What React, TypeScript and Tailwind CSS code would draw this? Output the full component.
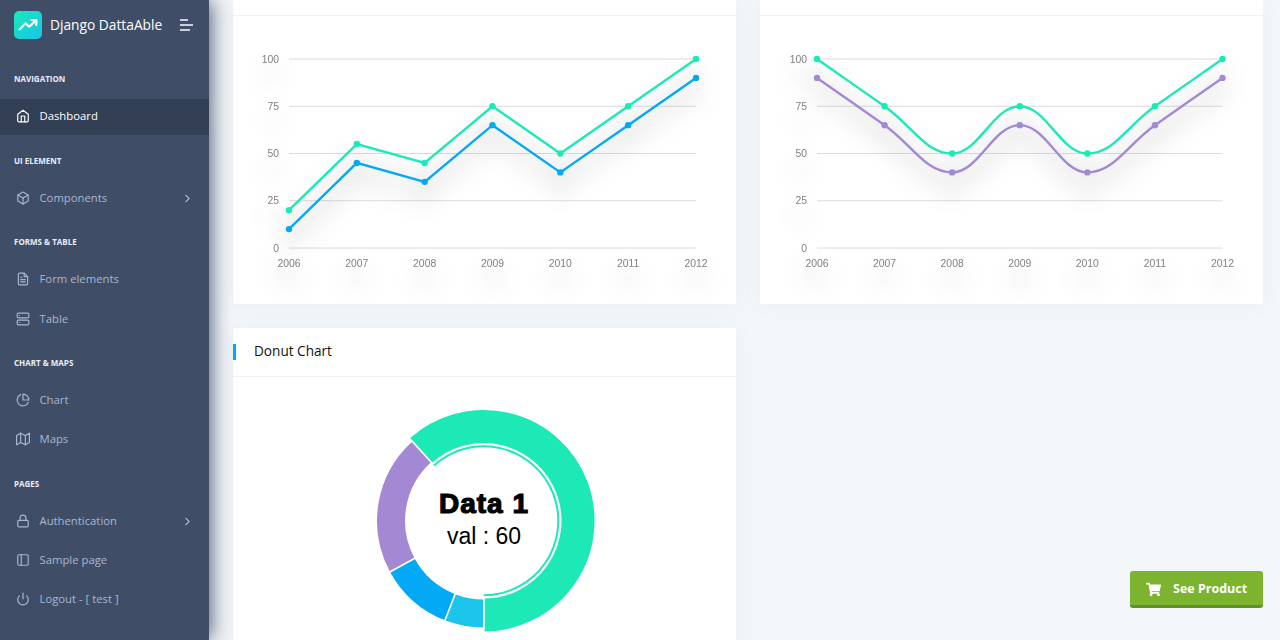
import type { ReactNode } from "react"
import { FiBox, FiChevronRight, FiFileText, FiHome, FiLock, FiMap, FiPieChart, FiPower, FiServer, FiSidebar } from "react-icons/fi"
import { FaShoppingCart } from "react-icons/fa"

const years = [2006, 2007, 2008, 2009, 2010, 2011, 2012]
const ticks = [100, 75, 50, 25, 0]

const yOf = (v: number) => 248 - v * 1.89

function straightPath(xs: number[], vals: number[]) {
  return vals.map((v, i) => `${i === 0 ? "M" : "L"}${xs[i]} ${yOf(v)}`).join(" ")
}

// same look as a smoothed line: flat at the peaks, straight-ish between
function smoothPath(xs: number[], vals: number[]) {
  const ys = vals.map(yOf)
  const slope = (i: number) => {
    if (i === 0) return (ys[1] - ys[0]) / (xs[1] - xs[0])
    if (i === ys.length - 1) return (ys[i] - ys[i - 1]) / (xs[i] - xs[i - 1])
    if ((ys[i] - ys[i - 1]) * (ys[i + 1] - ys[i]) <= 0) return 0
    return (ys[i + 1] - ys[i - 1]) / (xs[i + 1] - xs[i - 1])
  }
  let d = `M${xs[0]} ${ys[0]}`
  for (let i = 1; i < ys.length; i++) {
    const dx = (xs[i] - xs[i - 1]) * 0.4
    d += ` C${xs[i - 1] + dx} ${ys[i - 1] + slope(i - 1) * dx} ${xs[i] - dx} ${ys[i] - slope(i) * dx} ${xs[i]} ${ys[i]}`
  }
  return d
}

type Series = { color: string; values: number[] }

function LineChart({ left, x0, x1, smooth, series }: { left: number; x0: number; x1: number; smooth?: boolean; series: Series[] }) {
  const xs = years.map((_, i) => x0 + ((x1 - x0) * i) / 6)
  return (
    <svg viewBox={`${left} 16 503 288`} className="block h-[288px] w-[503px]">
      {ticks.map((t) => (
        <line key={t} x1={x0} x2={x1} y1={yOf(t)} y2={yOf(t)} stroke="#dcdcdc" strokeWidth="1" />
      ))}
      <g className="drop-shadow-[0_16px_11px_rgba(0,0,0,0.3)]" fill="#808080" fontSize="10.4" fontFamily="'Liberation Sans', sans-serif">
        {ticks.map((t) => (
          <text key={t} x={x0 - 10} y={yOf(t) + 3.5} textAnchor="end">
            {t}
          </text>
        ))}
        {years.map((y, i) => (
          <text key={y} x={xs[i]} y={267} textAnchor="middle">
            {y}
          </text>
        ))}
        {series.map((s) => (
          <g key={s.color}>
            <path d={smooth ? smoothPath(xs, s.values) : straightPath(xs, s.values)} fill="none" stroke={s.color} strokeWidth="2.4" />
            {s.values.map((v, i) => (
              <circle key={i} cx={xs[i]} cy={yOf(v)} r="3.2" fill={s.color} />
            ))}
          </g>
        ))}
      </g>
    </svg>
  )
}

function arc(r0: number, r1: number, a0: number, a1: number) {
  const pt = (r: number, a: number) => {
    const t = (a * Math.PI) / 180
    return `${(r * Math.sin(t)).toFixed(2)} ${(-r * Math.cos(t)).toFixed(2)}`
  }
  const large = a1 - a0 > 180 ? 1 : 0
  return `M${pt(r1, a0)} A${r1} ${r1} 0 ${large} 1 ${pt(r1, a1)} L${pt(r0, a1)} A${r0} ${r0} 0 ${large} 0 ${pt(r0, a0)} Z`
}

function Donut() {
  return (
    <svg viewBox="233 377 503 263" className="block h-[263px] w-[503px]">
      <g transform="translate(483.8 520.8)" stroke="#fff" strokeWidth="1.5">
        <path d={arc(77, 111.5, -42, 180)} fill="#1de9b6" />
        <path d={arc(73.5, 75.5, -42, 180)} fill="#1de9b6" strokeWidth="0" />
        <path d={arc(78, 107.5, -118.6, -42)} fill="#a389d4" />
        <path d={arc(78, 107.5, -158.7, -118.6)} fill="#04a9f5" />
        <path d={arc(78, 107.5, -180, -158.7)} fill="#1dc4e9" />
      </g>
      <text x="484" y="513" textAnchor="middle" fontSize="28" fontWeight="700" fontFamily="'Liberation Sans', sans-serif" stroke="#000" strokeWidth="1.2" letterSpacing="1">
        Data 1
      </text>
      <text x="484" y="544" textAnchor="middle" fontSize="23" fontFamily="'Liberation Sans', sans-serif" fill="#000">
        val : 60
      </text>
    </svg>
  )
}

function Caption({ children, className }: { children: ReactNode; className: string }) {
  return <div className={`pl-3.5 text-[8px] leading-[10px] font-bold text-[#e8edf7] uppercase ${className}`}>{children}</div>
}

function NavItem({ icon, label, active, arrow, className }: { icon: ReactNode; label: string; active?: boolean; arrow?: boolean; className?: string }) {
  return (
    <div className={`flex h-9 items-center pr-[15px] pb-0.5 pl-4 text-[11.3px] ${active ? "bg-[#333f54] text-white" : "text-[#a9b7d0]"} ${className ?? ""}`}>
      <span className="w-[23.5px] text-[14px]">{icon}</span>
      <span className="flex-1">{label}</span>
      {arrow && <FiChevronRight className="text-[13px]" />}
    </div>
  )
}

function Sidebar() {
  return (
    <aside className="relative z-10 h-[640px] w-[209px] shrink-0 overflow-hidden bg-[#3f4d67] shadow-[1px_0_20px_0_#3f4d67]">
      <div className="flex items-center pt-[11px] pl-3.5">
        <div className="flex h-7 w-7 items-center justify-center rounded-[5px] bg-gradient-to-br from-[#1de9b6] to-[#1dc4e9]">
          <svg viewBox="0 0 24 24" className="h-[20px] w-[20px]" fill="none" stroke="#fff" strokeWidth="2.6" strokeLinecap="round" strokeLinejoin="round">
            <polyline points="2 17 9 10 13.5 14 22 6" />
            <polyline points="16 6 22 6 22 12" />
          </svg>
        </div>
        <span className="ml-2 w-[112px] text-[13.75px] leading-7 whitespace-nowrap text-white">Django DattaAble</span>
        <div className="ml-[18px] flex w-[13px] flex-col gap-[3px]">
          <span className="h-[2px] w-2 bg-[#c9d0dc]" />
          <span className="h-[2px] w-[13px] bg-[#c9d0dc]" />
          <span className="h-[2px] w-2.5 bg-[#c9d0dc]" />
        </div>
      </div>
      <Caption className="mt-[35px]">Navigation</Caption>
      <NavItem className="mt-[15px]" active icon={<FiHome />} label="Dashboard" />
      <Caption className="mt-[21px]">UI Element</Caption>
      <NavItem className="mt-[15px]" icon={<FiBox />} label="Components" arrow />
      <Caption className="mt-5">Forms &amp; Table</Caption>
      <NavItem className="mt-[15px]" icon={<FiFileText />} label="Form elements" />
      <NavItem className="mt-1" icon={<FiServer />} label="Table" />
      <Caption className="mt-5">Chart &amp; Maps</Caption>
      <NavItem className="mt-[15px]" icon={<FiPieChart />} label="Chart" />
      <NavItem className="mt-[3px]" icon={<FiMap />} label="Maps" />
      <Caption className="mt-[21px]">Pages</Caption>
      <NavItem className="mt-[15px]" icon={<FiLock />} label="Authentication" arrow />
      <NavItem className="mt-[3px]" icon={<FiSidebar />} label="Sample page" />
      <NavItem className="mt-[3px]" icon={<FiPower />} label="Logout - [ test ]" />
    </aside>
  )
}

const green = "#1de9b6"
const blue = "#04a9f5"
const purple = "#a389d4"

export default function App() {
  return (
    <div className="relative flex h-[640px] w-[1280px] overflow-hidden bg-[#f4f7fa] font-['Open_Sans',sans-serif]">
      <Sidebar />
      <main className="flex-1 pr-[17px] pl-6">
        <div className="grid grid-cols-2 gap-6">
          <div className="h-[304px] bg-white shadow-[0_1px_20px_0_rgba(69,90,100,0.06)]">
            <div className="h-4 border-b border-[#f1f1f1]" />
            <LineChart
              left={233}
              x0={289}
              x1={696}
              series={[
                { color: green, values: [20, 55, 45, 75, 50, 75, 100] },
                { color: blue, values: [10, 45, 35, 65, 40, 65, 90] },
              ]}
            />
          </div>
          <div className="h-[304px] bg-white shadow-[0_1px_20px_0_rgba(69,90,100,0.06)]">
            <div className="h-4 border-b border-[#f1f1f1]" />
            <LineChart
              left={760}
              x0={817}
              x1={1222.5}
              smooth
              series={[
                { color: green, values: [100, 75, 50, 75, 50, 75, 100] },
                { color: purple, values: [90, 65, 40, 65, 40, 65, 90] },
              ]}
            />
          </div>
          <div className="h-[400px] bg-white shadow-[0_1px_20px_0_rgba(69,90,100,0.06)]">
            <div className="flex h-[49px] items-center border-b border-[#f1f1f1]">
              <span className="h-4 w-[3px] bg-[#04a9f5]" />
              <h5 className="ml-[18px] pb-[2px] text-[13.6px] font-normal text-[#111]">Donut Chart</h5>
            </div>
            <Donut />
          </div>
        </div>
      </main>
      <button className="absolute top-[571px] left-[1130px] flex h-[37px] w-[133px] items-center rounded-[3px] border-b-[3px] border-[#5f9126] bg-[#7cb430] pt-[2px] pl-[16px] text-[12.5px] font-bold text-white">
        <FaShoppingCart className="text-[15px]" />
        <span className="ml-[12px]">See Product</span>
      </button>
    </div>
  )
}
